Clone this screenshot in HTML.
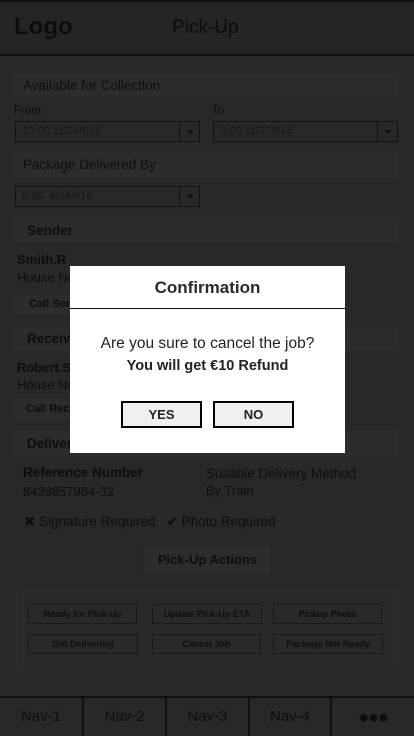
<!DOCTYPE html>
<html><head><meta charset="utf-8"><style>
*{margin:0;padding:0;box-sizing:border-box}
body{width:414px;height:736px;background:#282828;font-family:"Liberation Sans",sans-serif;color:#0d0d0d;position:relative;overflow:hidden}
.a{position:absolute;white-space:nowrap}
.sh{position:absolute;left:15px;width:383px;height:25px;background:#2c2c2c;font-size:13.5px;line-height:25px;white-space:nowrap}
.sel{position:absolute;height:21px;border:1px solid #111;font-size:11px;line-height:19px;padding-left:6px;color:#151515;white-space:nowrap}
.sel i{position:absolute;right:0;top:0;width:20px;height:19px;border-left:1px solid #111}
.sel i:after{content:"";position:absolute;left:6px;top:8px;border:4px solid transparent;border-top:4px solid #111;border-bottom:0}
.btn{position:absolute;background:#2c2c2c;font-size:11px;font-weight:bold;line-height:21px;padding-left:14px;height:21px;white-space:nowrap;overflow:hidden}
.ab{position:absolute;height:20px;border:1px solid #181818;font-size:9px;font-weight:bold;text-align:center;line-height:18px;white-space:nowrap}
.nav{position:absolute;top:698px;height:38px;font-size:15px;text-align:center;line-height:38px;border-right:2px solid #111}
</style></head><body>
<div class="a" style="left:0;top:0;width:414px;height:2px;background:#111"></div>
<div class="a" style="left:0;top:2px;width:414px;height:52px;background:#252525"></div>
<div class="a" style="left:0;top:54px;width:414px;height:2px;background:#111"></div>
<div class="a" style="left:14px;top:13px;font-size:24px;font-weight:bold">Logo</div>
<div class="a" style="left:172px;top:17px;font-size:19px;color:#0a0a0a">Pick-Up</div>

<div class="sh" style="top:73px;padding-left:8px">Available for Collection</div>
<div class="a" style="left:14px;top:105px;font-size:11.5px">From</div>
<div class="a" style="left:212px;top:105px;font-size:11.5px">To</div>
<div class="sel" style="left:15px;top:121px;width:185px">23:00 11/24/016<i></i></div>
<div class="sel" style="left:213px;top:121px;width:185px">5:00 11/27/016<i></i></div>
<div class="sh" style="top:152px;padding-left:8px">Package Delivered By</div>
<div class="sel" style="left:15px;top:186px;width:185px">6:00 &nbsp;4/24/016<i></i></div>
<div class="sh" style="top:218px;padding-left:12px;font-weight:bold">Sender</div>
<div class="a" style="left:17px;top:252px;font-size:13px;font-weight:bold">Smith.R</div>
<div class="a" style="left:17px;top:270px;font-size:13px">House No</div>
<div class="btn" style="left:15px;top:294px;width:80px">Call Sender</div>
<div class="sh" style="top:326px;padding-left:12px;font-weight:bold">Receiver</div>
<div class="a" style="left:17px;top:360px;font-size:13px;font-weight:bold">Robert.S</div>
<div class="a" style="left:17px;top:377px;font-size:13px">House No</div>
<div class="btn" style="left:15px;top:399px;width:80px;padding-left:11px">Call Receiver</div>
<div class="sh" style="top:431px;padding-left:12px;font-weight:bold">Delivery</div>
<div class="a" style="left:23px;top:465px;font-size:13.5px;font-weight:bold">Reference Number</div>
<div class="a" style="left:23px;top:484px;font-size:13px">8439857984-32</div>
<div class="a" style="left:206px;top:466px;font-size:13.5px">Suitable Delivery Method</div>
<div class="a" style="left:206px;top:483px;font-size:13px">By Train</div>
<div class="a" style="left:24px;top:514px;font-size:13.5px">✖ Signature Required &nbsp;&nbsp;✔ Photo Required</div>
<div class="a" style="left:143px;top:545px;width:129px;height:30px;background:#2c2c2c;border:1px solid #222;font-size:13px;font-weight:bold;text-align:center;line-height:28px">Pick-Up Actions</div>
<div class="a" style="left:16px;top:590px;width:383px;height:79px;border:1px solid #2d2d2d;background:#292929"></div>
<div class="ab" style="left:28px;top:604px;width:109px">Ready for Pick-Up</div>
<div class="ab" style="left:152px;top:604px;width:110px">Update Pick-Up ETA</div>
<div class="ab" style="left:273px;top:604px;width:109px">Pickup Photo</div>
<div class="ab" style="left:28px;top:634px;width:110px">Get Delivering</div>
<div class="ab" style="left:152px;top:634px;width:109px">Cancel Job</div>
<div class="ab" style="left:273px;top:634px;width:110px">Package Not Ready</div>

<div class="a" style="left:0;top:696px;width:414px;height:2px;background:#111"></div>
<div class="nav" style="left:0;width:84px">Nav-1</div>
<div class="nav" style="left:84px;width:83px">Nav-2</div>
<div class="nav" style="left:167px;width:83px">Nav-3</div>
<div class="nav" style="left:250px;width:82px">Nav-4</div>
<div class="nav" style="left:332px;width:82px;border:0;font-size:18px;letter-spacing:-1px">●●●</div>

<div class="a" style="left:70px;top:266px;width:275px;height:187px;background:#fff;color:#222">
<div class="a" style="left:0;top:12px;width:275px;text-align:center;font-size:17px;font-weight:bold;color:#2a2a2a">Confirmation</div>
<div class="a" style="left:0;top:42px;width:275px;height:1px;background:#111"></div>
<div class="a" style="left:0;top:69px;width:275px;text-align:center;font-size:15.5px">Are you sure to cancel the job?</div>
<div class="a" style="left:0;top:92px;width:275px;text-align:center;font-size:14.5px;font-weight:bold">You will get €10 Refund</div>
<div class="a" style="left:51px;top:135px;width:81px;height:27px;border:2px solid #000;background:#f0f0f0;text-align:center;line-height:23px;font-size:13px;font-weight:bold">YES</div>
<div class="a" style="left:143px;top:135px;width:81px;height:27px;border:2px solid #000;background:#f0f0f0;text-align:center;line-height:23px;font-size:13px;font-weight:bold">NO</div>
</div>
</body></html>
